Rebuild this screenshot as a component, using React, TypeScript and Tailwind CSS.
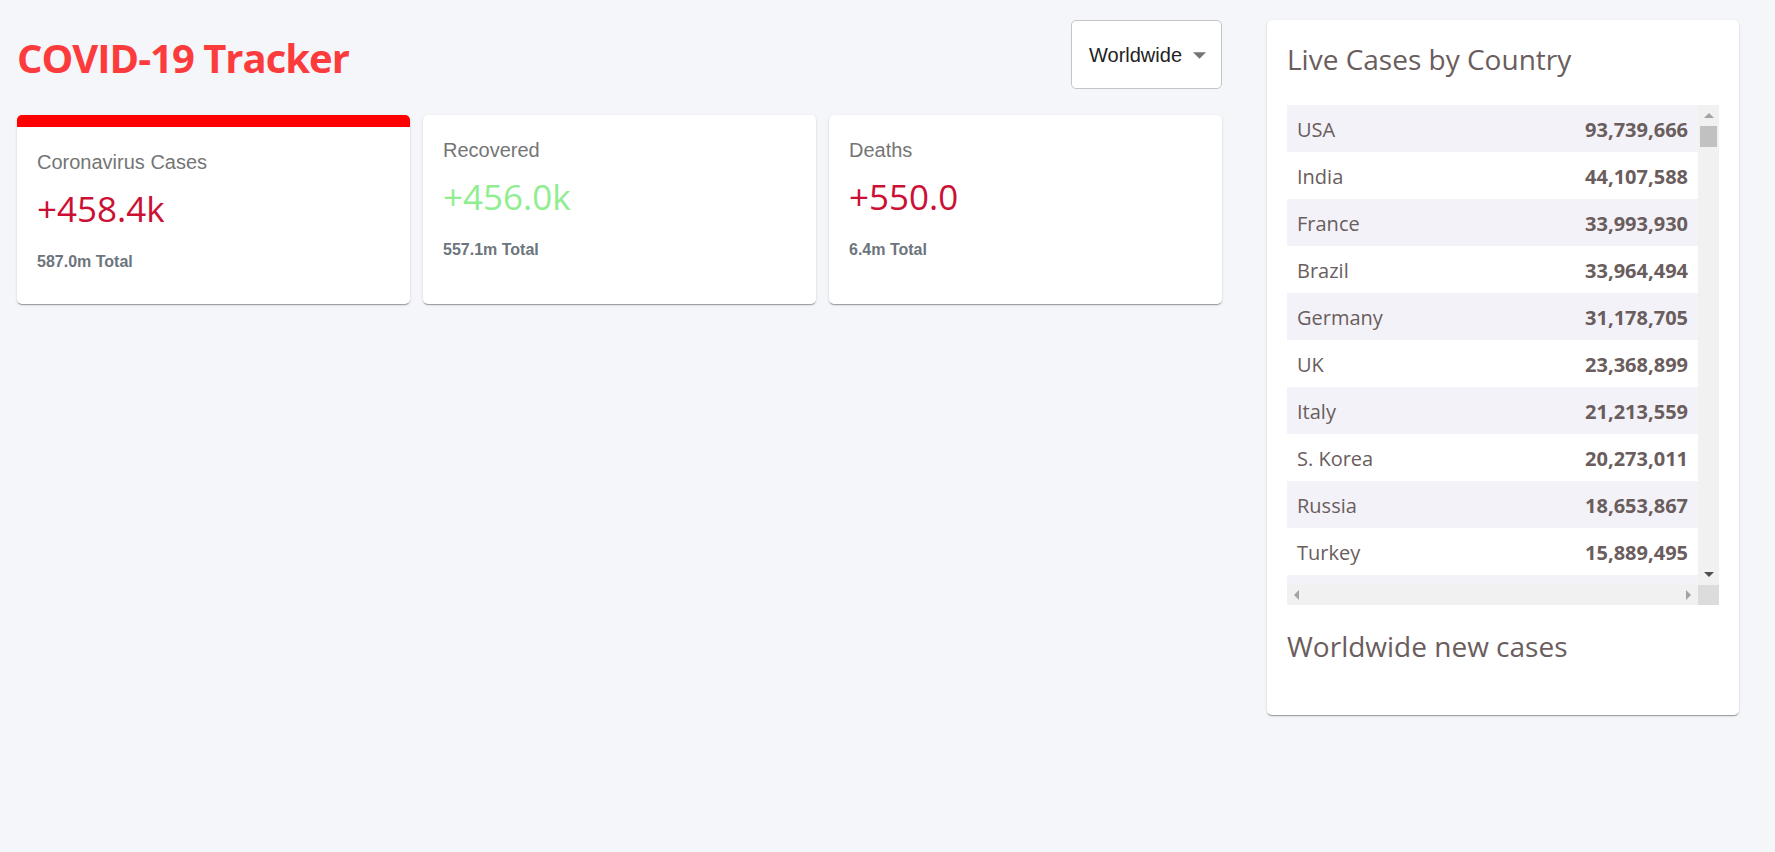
import React from "react";

type Country = { country: string; cases: number };

const countries: Country[] = [
  { country: "USA", cases: 93739666 },
  { country: "India", cases: 44107588 },
  { country: "France", cases: 33993930 },
  { country: "Brazil", cases: 33964494 },
  { country: "Germany", cases: 31178705 },
  { country: "UK", cases: 23368899 },
  { country: "Italy", cases: 21213559 },
  { country: "S. Korea", cases: 20273011 },
  { country: "Russia", cases: 18653867 },
  { country: "Turkey", cases: 15889495 },
  { country: "Spain", cases: 13264717 },
];

const sans = "font-['Liberation_Sans',Arial,sans-serif]";
const open = "font-['Open_Sans','Noto_Sans',sans-serif]";

function InfoBox({
  title,
  cases,
  total,
  active,
  green,
}: {
  title: string;
  cases: string;
  total: string;
  active?: boolean;
  green?: boolean;
}) {
  return (
    <div
      className={`flex-1 rounded-[5px] bg-white px-5 pb-[30px] pt-5 shadow-[0_2px_1px_-1px_rgba(0,0,0,0.2),0_1px_1px_0_rgba(0,0,0,0.14),0_1px_3px_0_rgba(0,0,0,0.12)] ${
        active ? "border-t-[12px] border-[#ff0000]" : ""
      }`}
    >
      <p className={`${sans} text-[20px] leading-[30px] text-[#757575]`}>{title}</p>
      <h2
        className={`${open} mt-2 text-[35px] font-medium leading-[48px] ${
          green ? "text-[#90ee90]" : "text-[#cc1034]"
        }`}
      >
        {cases}
      </h2>
      <p className={`${sans} mt-[17px] text-[16px] font-bold leading-6 text-[#6c757d]`}>
        {total} Total
      </p>
    </div>
  );
}

function Tri({ dir, color }: { dir: "up" | "down" | "left" | "right"; color: string }) {
  const pts = {
    up: "0,5 5,0 10,5",
    down: "0,0 10,0 5,5",
    left: "5,0 5,10 0,5",
    right: "0,0 0,10 5,5",
  }[dir];
  const vert = dir === "up" || dir === "down";
  return (
    <svg width={vert ? 10 : 5} height={vert ? 5 : 10} viewBox={vert ? "0 0 10 5" : "0 0 5 10"}>
      <polygon points={pts} fill={color} />
    </svg>
  );
}

export default function App() {
  return (
    <div className="flex min-h-screen gap-[45px] bg-[#f5f6fa] pl-[17px] pt-5">
      {/* left side */}
      <div className="flex w-[1205px] flex-col">
        <div className="mb-[26px] flex h-[69px] items-center justify-between">
          <h1 className={`${open} pt-[6px] text-[40px] font-bold tracking-[-1px] text-[#fc3c3c]`}>
            COVID-19 Tracker
          </h1>
          <div className="flex h-[69px] w-[151px] items-center rounded-[5px] border border-[#c4c4c4] bg-white pl-[17px]">
            <span className={`${sans} text-[20px] text-[#222]`}>Worldwide</span>
            <svg className="ml-[11px] mt-[1px]" width="13" height="7" viewBox="0 0 10 5">
              <polygon points="0,0 10,0 5,5" fill="#757575" />
            </svg>
          </div>
        </div>

        <div className="flex items-stretch gap-[13px]">
          <InfoBox title="Coronavirus Cases" cases="+458.4k" total="587.0m" active />
          <InfoBox title="Recovered" cases="+456.0k" total="557.1m" green />
          <InfoBox title="Deaths" cases="+550.0" total="6.4m" />
        </div>
      </div>

      {/* right side */}
      <div className="w-[472px] self-start rounded-[5px] bg-white px-5 pb-5 pt-5 shadow-[0_2px_1px_-1px_rgba(0,0,0,0.2),0_1px_1px_0_rgba(0,0,0,0.14),0_1px_3px_0_rgba(0,0,0,0.12)]">
        <h3 className={`${open} mb-[27px] text-[28px] leading-[38px] text-[#6a5d5d]`}>
          Live Cases by Country
        </h3>

        <div className="flex h-[500px] w-[432px] flex-col">
          <div className="flex min-h-0 flex-1">
            <div className="flex-1 overflow-hidden">
              {countries.map((c, i) => (
                <div
                  key={c.country}
                  className={`${open} flex justify-between px-[10px] pb-[9px] pt-[11px] text-[20px] leading-[27px] text-[#6a5d5d] ${
                    i % 2 === 0 ? "bg-[#f3f2f8]" : "bg-white"
                  }`}
                >
                  <span>{c.country}</span>
                  <span className="font-bold">{c.cases.toLocaleString("en-US")}</span>
                </div>
              ))}
            </div>
            <div className="flex w-[21px] flex-col items-center bg-[#f1f1f1]">
              <div className="flex h-[21px] items-center justify-center">
                <Tri dir="up" color="#a3a3a3" />
              </div>
              <div className="h-[21px] w-[17px] bg-[#c1c1c1]" />
              <div className="flex-1" />
              <div className="flex h-[21px] items-center justify-center">
                <Tri dir="down" color="#505050" />
              </div>
            </div>
          </div>
          <div className="flex h-[20px]">
            <div className="flex flex-1 items-center justify-between bg-[#f1f1f1] px-[7px]">
              <Tri dir="left" color="#a3a3a3" />
              <Tri dir="right" color="#a3a3a3" />
            </div>
            <div className="w-[21px] bg-[#dcdcdc]" />
          </div>
        </div>

        <h3 className={`${open} mt-[22px] text-[28px] leading-[38px] text-[#6a5d5d]`}>
          Worldwide new cases
        </h3>
        <div className="h-[30px]" />
      </div>
    </div>
  );
}
